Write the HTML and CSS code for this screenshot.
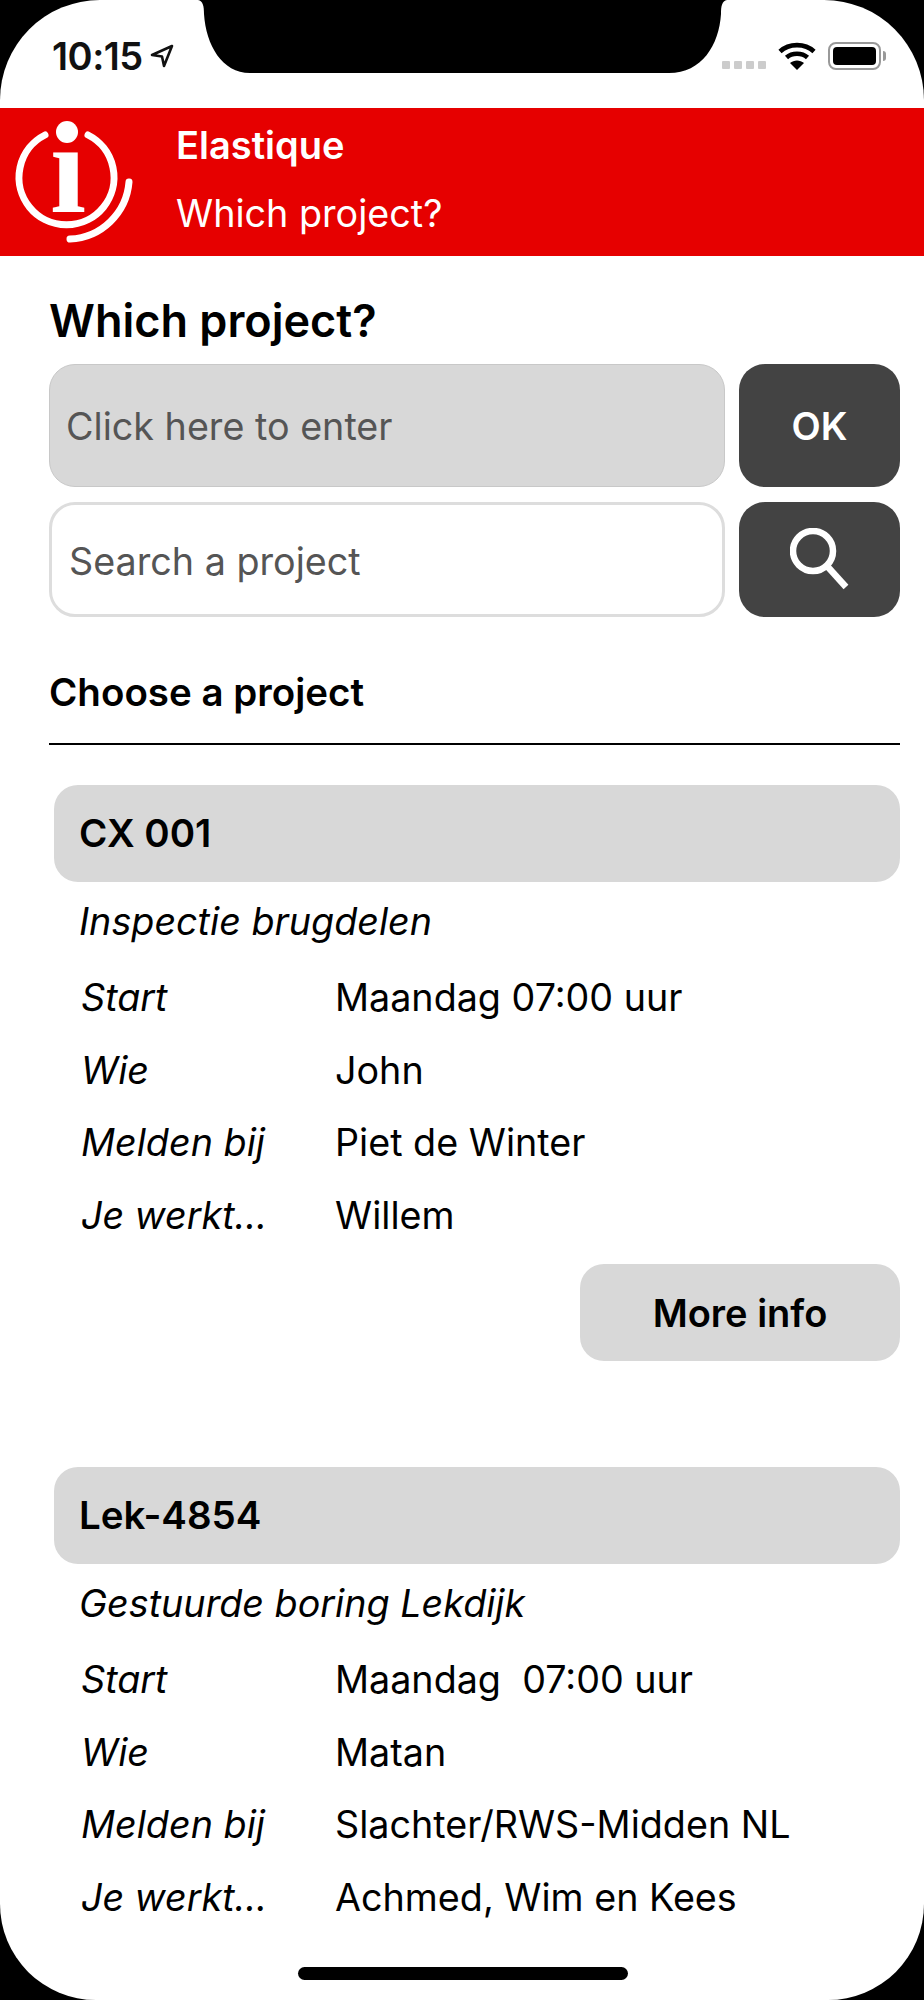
FILE: index.html
```html
<!DOCTYPE html>
<html lang="en">
<head>
    <meta charset="UTF-8">
    <meta name="viewport" content="width=device-width, initial-scale=1.0">
    <title>Which project?</title>
    <link rel="stylesheet" href="styles.css">
</head>
<body>
    <div class="screen">
        <svg class="notch" width="540" height="74" viewBox="0 0 540 74">
            <path d="M6 0H535C530 1 529 6 529 14C527 45 510 73 477 73H58C30 73 14 45 12 14C12 6 11 1 6 0Z" fill="#000"/>
        </svg>

        <div class="statusBar">
            <div class="statusTime">
                <span>10:15</span>
                <svg width="24" height="24" viewBox="0 0 24 24">
                    <path d="M22 2L2 11L12 12.5L14 22Z" fill="none" stroke="#111" stroke-width="2.6" stroke-linejoin="round"/>
                </svg>
            </div>
            <div class="statusIcons">
                <div class="signal"><i></i><i></i><i></i><i></i></div>
                <svg width="38" height="28" viewBox="0 0 38 28">
                    <path d="M2 9.5C11 1 27 1 36 9.5" fill="none" stroke="#000" stroke-width="4.6"/>
                    <path d="M8.5 15.5C14 10.5 24 10.5 29.5 15.5" fill="none" stroke="#000" stroke-width="4.6"/>
                    <path d="M12 21L19 28L26 21C22 17.5 16 17.5 12 21Z" fill="#000"/>
                </svg>
                <div class="battery"><div class="batteryFill"></div></div>
                <div class="batteryNub"></div>
            </div>
        </div>

        <div class="topBar">
            <svg class="logo" width="136" height="148" viewBox="0 0 136 148">
                <path d="M45 27A47.5 47.5 0 1 0 88 27" fill="none" stroke="#fff" stroke-width="7" stroke-linecap="round"/>
                <path d="M129 74A62 62 0 0 1 70 131" fill="none" stroke="#fff" stroke-width="7" stroke-linecap="round"/>
                <circle cx="67" cy="24" r="11" fill="#fff"/>
                <text class="logoLetter" x="68" y="104" text-anchor="middle">ı</text>
            </svg>
            <div class="topTitles">
                <div class="appName">Elastique</div>
                <div class="pageName">Which project?</div>
            </div>
        </div>

        <div class="content">
            <h1>Which project?</h1>

            <div class="inputRow">
                <input class="enterInput" type="text" placeholder="Click here to enter">
                <button class="darkButton">OK</button>
            </div>
            <div class="inputRow searchRow">
                <input class="searchInput" type="text" placeholder="Search a project">
                <button class="darkButton">
                    <svg width="60" height="64" viewBox="0 0 60 64">
                        <circle cx="23" cy="23" r="20" fill="none" stroke="#fff" stroke-width="6.5"/>
                        <path d="M37 38L56 59" stroke="#fff" stroke-width="6.5"/>
                    </svg>
                </button>
            </div>

            <h2>Choose a project</h2>

            <div class="project">
                <div class="projectCode">CX 001</div>
                <div class="projectTitle">Inspectie brugdelen</div>
                <div class="infoRow"><span>Start</span><div>Maandag 07:00 uur</div></div>
                <div class="infoRow"><span>Wie</span><div>John</div></div>
                <div class="infoRow"><span>Melden bij</span><div>Piet de Winter</div></div>
                <div class="infoRow"><span>Je werkt…</span><div>Willem</div></div>
                <div class="moreArea"><button class="moreButton">More info</button></div>
            </div>

            <div class="project">
                <div class="projectCode">Lek-4854</div>
                <div class="projectTitle">Gestuurde boring Lekdijk</div>
                <div class="infoRow"><span>Start</span><div>Maandag&nbsp; 07:00 uur</div></div>
                <div class="infoRow"><span>Wie</span><div>Matan</div></div>
                <div class="infoRow"><span>Melden bij</span><div>Slachter/RWS-Midden NL</div></div>
                <div class="infoRow"><span>Je werkt…</span><div>Achmed, Wim en Kees</div></div>
            </div>
        </div>

        <div class="homeBar"></div>
    </div>
</body>
</html>
```

FILE: styles.css
```css
* {
    box-sizing: border-box;
}

body {
    margin: 0;
    background-color: #000;
    font-family: Inter, "Liberation Sans", sans-serif;
    color: #000;
}

.screen {
    position: relative;
    height: 2000px;
    overflow: hidden;
    background-color: #fff;
    border-radius: 100px 100px 96px 96px;
}

.notch {
    position: absolute;
    top: 0;
    left: 192px;
}

.statusBar {
    height: 108px;
    padding: 36px 38px 0 52px;
    display: flex;
    justify-content: space-between;
    align-items: flex-start;
}

.statusTime {
    display: flex;
    align-items: center;
    gap: 7px;
    font-size: 38px;
    font-weight: 600;
    letter-spacing: -0.5px;
    line-height: 40px;
    color: #111;
}

.statusIcons {
    display: flex;
    align-items: flex-end;
    padding-top: 6px;
}

.signal {
    display: flex;
    gap: 4px;
    margin-right: 12px;
    margin-bottom: 1px;
}

.signal i {
    display: block;
    width: 8px;
    height: 8px;
    border-radius: 1px;
    background-color: #ccc;
}

.battery {
    width: 53px;
    height: 28px;
    margin-left: 12px;
    padding: 3px;
    border: 2px solid #999;
    border-radius: 8px;
}

.batteryFill {
    height: 100%;
    border-radius: 4px;
    background-color: #000;
}

.batteryNub {
    width: 3px;
    height: 10px;
    margin: 0 0 9px 2px;
    border-radius: 0 3px 3px 0;
    background-color: #999;
}

.topBar {
    height: 148px;
    display: flex;
    background-color: #e60000;
    color: #fff;
}

.logo {
    flex: none;
    overflow: visible;
}

.logoLetter {
    font-family: "Liberation Serif", serif;
    font-weight: 700;
    font-size: 130px;
    fill: #fff;
}

.topTitles {
    margin-left: 40px;
    padding-top: 13px;
}

.appName {
    font-size: 38px;
    font-weight: 600;
    line-height: 48px;
}

.pageName {
    margin-top: 20px;
    font-size: 37.7px;
    line-height: 48px;
}

.content {
    padding: 39px 24px 0 49px;
}

h1 {
    margin: 0 0 17px;
    font-size: 45px;
    font-weight: 600;
    line-height: 52px;
}

.inputRow {
    display: flex;
    gap: 14px;
    height: 123px;
}

.searchRow {
    height: 115px;
    margin-top: 15px;
}

input {
    flex: 1;
    min-width: 0;
    font-family: inherit;
    font-size: 37.7px;
    outline: none;
}

input::placeholder {
    color: #555;
    opacity: 1;
}

.enterInput {
    padding: 0 16px;
    background-color: #d8d8d8;
    border: 1px solid #c8c8c8;
    border-radius: 26px;
}

.searchInput {
    padding: 2px 17px 0;
    background-color: #fff;
    border: 3px solid #ddd;
    border-radius: 26px;
}

.darkButton {
    flex: none;
    width: 161px;
    padding: 0;
    background-color: #434343;
    border: none;
    border-radius: 26px;
    color: #fff;
    font-family: inherit;
    font-size: 38px;
    font-weight: 600;
}

.darkButton svg {
    display: block;
    margin: 0 auto;
}

h2 {
    margin: 51px 0 0;
    padding-bottom: 27px;
    border-bottom: 2px solid #000;
    font-size: 38.5px;
    font-weight: 600;
    line-height: 48px;
}

.project {
    margin-top: 40px;
    padding-left: 5px;
}

.project + .project {
    margin-top: 0;
}

.projectCode {
    height: 97px;
    padding-left: 25px;
    background-color: #d8d8d8;
    border-radius: 24px;
    font-size: 38.5px;
    font-weight: 600;
    line-height: 97px;
}

.projectTitle {
    margin: 16px 0 30px 25px;
    font-size: 37.7px;
    font-style: italic;
    line-height: 46px;
}

.infoRow {
    display: flex;
    height: 72.5px;
    padding-left: 27px;
    font-size: 37.7px;
    line-height: 46px;
}

.infoRow span {
    width: 254px;
    flex: none;
    font-style: italic;
}

.moreArea {
    display: flex;
    justify-content: flex-end;
    margin-top: 0;
    padding-bottom: 106px;
}

.moreButton {
    width: 320px;
    height: 97px;
    padding: 0;
    background-color: #d8d8d8;
    border: none;
    border-radius: 24px;
    color: #000;
    font-family: inherit;
    font-size: 38px;
    font-weight: 600;
}

.homeBar {
    position: absolute;
    left: 298px;
    bottom: 20px;
    width: 330px;
    height: 13px;
    border-radius: 7px;
    background-color: #000;
}
```
